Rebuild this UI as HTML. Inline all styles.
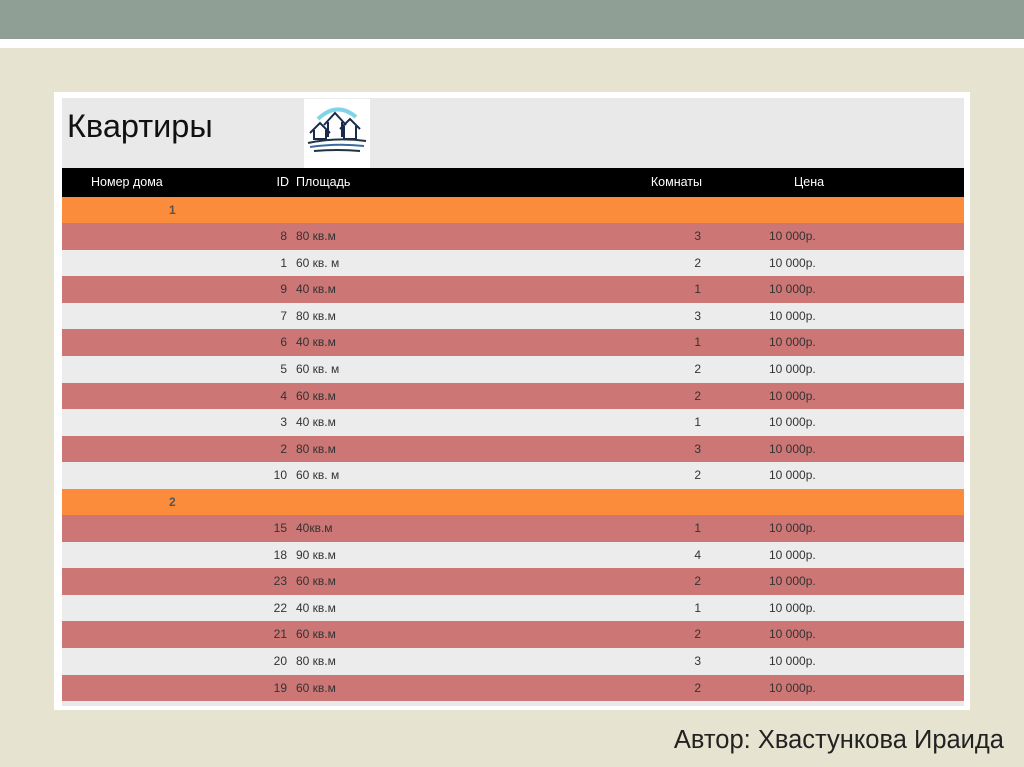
<!DOCTYPE html><html><head><meta charset="utf-8"><style>
*{margin:0;padding:0;box-sizing:border-box}
body{width:1024px;height:767px;background:#e6e4d0;position:relative;overflow:hidden;font-family:"Liberation Sans",sans-serif}
.top{position:absolute;left:0;top:0;width:1024px;height:39px;background:#8f9f95}
.ws{position:absolute;left:0;top:39px;width:1024px;height:9px;background:#fff}
.card{position:absolute;left:54px;top:92px;width:916px;height:618px;background:#fff}
.in{position:absolute;left:62px;top:98px;width:902px;height:608px;background:#e9e9ea}
.title{position:absolute;left:67px;top:108px;font-size:32.5px;color:#111}
.logo{position:absolute;left:304px;top:99px;width:66px;height:69px;background:#fff}
.tbl{position:absolute;left:62px;top:168px;width:902px}
.r{position:relative;height:26.6px;font-size:12px;color:#333;line-height:26.6px}
.r span{position:absolute}
.h{background:#000;color:#fff;height:29px;line-height:29px;font-size:12.5px}
.o{background:#fb8c3c;height:26px;line-height:26px;font-weight:bold;color:#555}
.p{background:#cc7675}
.g{background:#ececec}
.id{right:677px}.ar{left:234px}.km{right:263px}.pr{left:707px}
.auth{position:absolute;right:20px;top:726px;font-size:25.5px;color:#222}
</style></head><body>
<div class="top"></div><div class="ws"></div>
<div class="card"></div><div class="in"></div>
<div class="title">Квартиры</div>
<div class="logo"><svg width="66" height="69" viewBox="0 0 66 69">
<path d="M14 20 Q33 2 52 18" stroke="#7fd4e8" stroke-width="4" fill="none"/>
<g stroke="#1a2a4a" stroke-width="2" fill="none">
<path d="M6 34 L16 24 L26 34 M10 31 V40 H22 V31"/>
<path d="M20 26 L31 14 L42 26 M24 23 V38 M38 23 V38"/>
<path d="M36 30 L46 20 L56 30 M40 27 V40 H52 V27"/>
<path d="M4 44 Q33 38 62 42" stroke="#234"/>
<path d="M6 48 Q33 44 60 47" stroke="#3a6aa0"/>
<path d="M10 52 Q33 50 56 52" stroke="#234"/>
</g></svg></div>
<div class="tbl">
<div class="r h"><span style="left:29px">Номер дома</span><span style="right:675px">ID</span><span class="ar">Площадь</span><span style="right:262px">Комнаты</span><span style="left:732px">Цена</span></div>
<div class="r o"><span style="left:107px">1</span></div>
<div class="r p"><span class="id">8</span><span class="ar">80 кв.м</span><span class="km">3</span><span class="pr">10 000р.</span></div>
<div class="r g"><span class="id">1</span><span class="ar">60 кв. м</span><span class="km">2</span><span class="pr">10 000р.</span></div>
<div class="r p"><span class="id">9</span><span class="ar">40 кв.м</span><span class="km">1</span><span class="pr">10 000р.</span></div>
<div class="r g"><span class="id">7</span><span class="ar">80 кв.м</span><span class="km">3</span><span class="pr">10 000р.</span></div>
<div class="r p"><span class="id">6</span><span class="ar">40 кв.м</span><span class="km">1</span><span class="pr">10 000р.</span></div>
<div class="r g"><span class="id">5</span><span class="ar">60 кв. м</span><span class="km">2</span><span class="pr">10 000р.</span></div>
<div class="r p"><span class="id">4</span><span class="ar">60 кв.м</span><span class="km">2</span><span class="pr">10 000р.</span></div>
<div class="r g"><span class="id">3</span><span class="ar">40 кв.м</span><span class="km">1</span><span class="pr">10 000р.</span></div>
<div class="r p"><span class="id">2</span><span class="ar">80 кв.м</span><span class="km">3</span><span class="pr">10 000р.</span></div>
<div class="r g"><span class="id">10</span><span class="ar">60 кв. м</span><span class="km">2</span><span class="pr">10 000р.</span></div>
<div class="r o"><span style="left:107px">2</span></div>
<div class="r p"><span class="id">15</span><span class="ar">40кв.м</span><span class="km">1</span><span class="pr">10 000р.</span></div>
<div class="r g"><span class="id">18</span><span class="ar">90 кв.м</span><span class="km">4</span><span class="pr">10 000р.</span></div>
<div class="r p"><span class="id">23</span><span class="ar">60 кв.м</span><span class="km">2</span><span class="pr">10 000р.</span></div>
<div class="r g"><span class="id">22</span><span class="ar">40 кв.м</span><span class="km">1</span><span class="pr">10 000р.</span></div>
<div class="r p"><span class="id">21</span><span class="ar">60 кв.м</span><span class="km">2</span><span class="pr">10 000р.</span></div>
<div class="r g"><span class="id">20</span><span class="ar">80 кв.м</span><span class="km">3</span><span class="pr">10 000р.</span></div>
<div class="r p"><span class="id">19</span><span class="ar">60 кв.м</span><span class="km">2</span><span class="pr">10 000р.</span></div>
</div>
<div class="auth">Автор: Хвастункова Ираида</div>
</body></html>
